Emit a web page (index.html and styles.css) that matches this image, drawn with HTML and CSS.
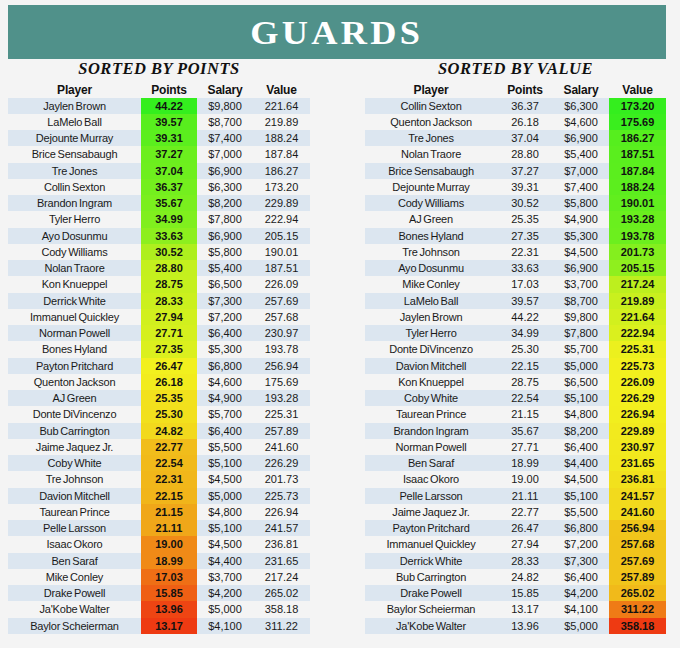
FILE: index.html
```html
<!DOCTYPE html>
<html lang="en">
<head>
<meta charset="utf-8">
<title>Guards</title>
<link rel="stylesheet" href="styles.css">
</head>
<body>
<div class="page">
  <header class="banner"><h1 class="title">GUARDS</h1></header>
  <div class="boards">
    <section class="board board-left">
      <h2 class="subtitle">SORTED BY POINTS</h2>
      <div class="grid" data-col="1" data-dir="high">
        <div class="hrow"><span>Player</span><span>Points</span><span>Salary</span><span>Value</span></div>
        <div class="row"><span class="name">Jaylen Brown</span><span class="hot">44.22</span><span>$9,800</span><span>221.64</span></div>
        <div class="row"><span class="name">LaMelo Ball</span><span class="hot">39.57</span><span>$8,700</span><span>219.89</span></div>
        <div class="row"><span class="name">Dejounte Murray</span><span class="hot">39.31</span><span>$7,400</span><span>188.24</span></div>
        <div class="row"><span class="name">Brice Sensabaugh</span><span class="hot">37.27</span><span>$7,000</span><span>187.84</span></div>
        <div class="row"><span class="name">Tre Jones</span><span class="hot">37.04</span><span>$6,900</span><span>186.27</span></div>
        <div class="row"><span class="name">Collin Sexton</span><span class="hot">36.37</span><span>$6,300</span><span>173.20</span></div>
        <div class="row"><span class="name">Brandon Ingram</span><span class="hot">35.67</span><span>$8,200</span><span>229.89</span></div>
        <div class="row"><span class="name">Tyler Herro</span><span class="hot">34.99</span><span>$7,800</span><span>222.94</span></div>
        <div class="row"><span class="name">Ayo Dosunmu</span><span class="hot">33.63</span><span>$6,900</span><span>205.15</span></div>
        <div class="row"><span class="name">Cody Williams</span><span class="hot">30.52</span><span>$5,800</span><span>190.01</span></div>
        <div class="row"><span class="name">Nolan Traore</span><span class="hot">28.80</span><span>$5,400</span><span>187.51</span></div>
        <div class="row"><span class="name">Kon Knueppel</span><span class="hot">28.75</span><span>$6,500</span><span>226.09</span></div>
        <div class="row"><span class="name">Derrick White</span><span class="hot">28.33</span><span>$7,300</span><span>257.69</span></div>
        <div class="row"><span class="name">Immanuel Quickley</span><span class="hot">27.94</span><span>$7,200</span><span>257.68</span></div>
        <div class="row"><span class="name">Norman Powell</span><span class="hot">27.71</span><span>$6,400</span><span>230.97</span></div>
        <div class="row"><span class="name">Bones Hyland</span><span class="hot">27.35</span><span>$5,300</span><span>193.78</span></div>
        <div class="row"><span class="name">Payton Pritchard</span><span class="hot">26.47</span><span>$6,800</span><span>256.94</span></div>
        <div class="row"><span class="name">Quenton Jackson</span><span class="hot">26.18</span><span>$4,600</span><span>175.69</span></div>
        <div class="row"><span class="name">AJ Green</span><span class="hot">25.35</span><span>$4,900</span><span>193.28</span></div>
        <div class="row"><span class="name">Donte DiVincenzo</span><span class="hot">25.30</span><span>$5,700</span><span>225.31</span></div>
        <div class="row"><span class="name">Bub Carrington</span><span class="hot">24.82</span><span>$6,400</span><span>257.89</span></div>
        <div class="row"><span class="name">Jaime Jaquez Jr.</span><span class="hot">22.77</span><span>$5,500</span><span>241.60</span></div>
        <div class="row"><span class="name">Coby White</span><span class="hot">22.54</span><span>$5,100</span><span>226.29</span></div>
        <div class="row"><span class="name">Tre Johnson</span><span class="hot">22.31</span><span>$4,500</span><span>201.73</span></div>
        <div class="row"><span class="name">Davion Mitchell</span><span class="hot">22.15</span><span>$5,000</span><span>225.73</span></div>
        <div class="row"><span class="name">Taurean Prince</span><span class="hot">21.15</span><span>$4,800</span><span>226.94</span></div>
        <div class="row"><span class="name">Pelle Larsson</span><span class="hot">21.11</span><span>$5,100</span><span>241.57</span></div>
        <div class="row"><span class="name">Isaac Okoro</span><span class="hot">19.00</span><span>$4,500</span><span>236.81</span></div>
        <div class="row"><span class="name">Ben Saraf</span><span class="hot">18.99</span><span>$4,400</span><span>231.65</span></div>
        <div class="row"><span class="name">Mike Conley</span><span class="hot">17.03</span><span>$3,700</span><span>217.24</span></div>
        <div class="row"><span class="name">Drake Powell</span><span class="hot">15.85</span><span>$4,200</span><span>265.02</span></div>
        <div class="row"><span class="name">Ja'Kobe Walter</span><span class="hot">13.96</span><span>$5,000</span><span>358.18</span></div>
        <div class="row"><span class="name">Baylor Scheierman</span><span class="hot">13.17</span><span>$4,100</span><span>311.22</span></div>
      </div>
    </section>
    <section class="board board-right">
      <h2 class="subtitle">SORTED BY VALUE</h2>
      <div class="grid" data-col="3" data-dir="low">
        <div class="hrow"><span>Player</span><span>Points</span><span>Salary</span><span>Value</span></div>
        <div class="row"><span class="name">Collin Sexton</span><span>36.37</span><span>$6,300</span><span class="hot">173.20</span></div>
        <div class="row"><span class="name">Quenton Jackson</span><span>26.18</span><span>$4,600</span><span class="hot">175.69</span></div>
        <div class="row"><span class="name">Tre Jones</span><span>37.04</span><span>$6,900</span><span class="hot">186.27</span></div>
        <div class="row"><span class="name">Nolan Traore</span><span>28.80</span><span>$5,400</span><span class="hot">187.51</span></div>
        <div class="row"><span class="name">Brice Sensabaugh</span><span>37.27</span><span>$7,000</span><span class="hot">187.84</span></div>
        <div class="row"><span class="name">Dejounte Murray</span><span>39.31</span><span>$7,400</span><span class="hot">188.24</span></div>
        <div class="row"><span class="name">Cody Williams</span><span>30.52</span><span>$5,800</span><span class="hot">190.01</span></div>
        <div class="row"><span class="name">AJ Green</span><span>25.35</span><span>$4,900</span><span class="hot">193.28</span></div>
        <div class="row"><span class="name">Bones Hyland</span><span>27.35</span><span>$5,300</span><span class="hot">193.78</span></div>
        <div class="row"><span class="name">Tre Johnson</span><span>22.31</span><span>$4,500</span><span class="hot">201.73</span></div>
        <div class="row"><span class="name">Ayo Dosunmu</span><span>33.63</span><span>$6,900</span><span class="hot">205.15</span></div>
        <div class="row"><span class="name">Mike Conley</span><span>17.03</span><span>$3,700</span><span class="hot">217.24</span></div>
        <div class="row"><span class="name">LaMelo Ball</span><span>39.57</span><span>$8,700</span><span class="hot">219.89</span></div>
        <div class="row"><span class="name">Jaylen Brown</span><span>44.22</span><span>$9,800</span><span class="hot">221.64</span></div>
        <div class="row"><span class="name">Tyler Herro</span><span>34.99</span><span>$7,800</span><span class="hot">222.94</span></div>
        <div class="row"><span class="name">Donte DiVincenzo</span><span>25.30</span><span>$5,700</span><span class="hot">225.31</span></div>
        <div class="row"><span class="name">Davion Mitchell</span><span>22.15</span><span>$5,000</span><span class="hot">225.73</span></div>
        <div class="row"><span class="name">Kon Knueppel</span><span>28.75</span><span>$6,500</span><span class="hot">226.09</span></div>
        <div class="row"><span class="name">Coby White</span><span>22.54</span><span>$5,100</span><span class="hot">226.29</span></div>
        <div class="row"><span class="name">Taurean Prince</span><span>21.15</span><span>$4,800</span><span class="hot">226.94</span></div>
        <div class="row"><span class="name">Brandon Ingram</span><span>35.67</span><span>$8,200</span><span class="hot">229.89</span></div>
        <div class="row"><span class="name">Norman Powell</span><span>27.71</span><span>$6,400</span><span class="hot">230.97</span></div>
        <div class="row"><span class="name">Ben Saraf</span><span>18.99</span><span>$4,400</span><span class="hot">231.65</span></div>
        <div class="row"><span class="name">Isaac Okoro</span><span>19.00</span><span>$4,500</span><span class="hot">236.81</span></div>
        <div class="row"><span class="name">Pelle Larsson</span><span>21.11</span><span>$5,100</span><span class="hot">241.57</span></div>
        <div class="row"><span class="name">Jaime Jaquez Jr.</span><span>22.77</span><span>$5,500</span><span class="hot">241.60</span></div>
        <div class="row"><span class="name">Payton Pritchard</span><span>26.47</span><span>$6,800</span><span class="hot">256.94</span></div>
        <div class="row"><span class="name">Immanuel Quickley</span><span>27.94</span><span>$7,200</span><span class="hot">257.68</span></div>
        <div class="row"><span class="name">Derrick White</span><span>28.33</span><span>$7,300</span><span class="hot">257.69</span></div>
        <div class="row"><span class="name">Bub Carrington</span><span>24.82</span><span>$6,400</span><span class="hot">257.89</span></div>
        <div class="row"><span class="name">Drake Powell</span><span>15.85</span><span>$4,200</span><span class="hot">265.02</span></div>
        <div class="row"><span class="name">Baylor Scheierman</span><span>13.17</span><span>$4,100</span><span class="hot">311.22</span></div>
        <div class="row"><span class="name">Ja'Kobe Walter</span><span>13.96</span><span>$5,000</span><span class="hot">358.18</span></div>
      </div>
    </section>
  </div>
</div>
<script src="script.js"></script>
</body>
</html>
```

FILE: styles.css
```css
html, body {
  margin: 0;
  padding: 0;
  background: #f4f4f4;
}

body {
  font-family: "Liberation Sans", Arial, sans-serif;
  color: #141414;
}

.page {
  padding-top: 5px;
}

.banner {
  margin: 0 14px 0 8px;
  height: 54px;
  background: #50918a;
  display: flex;
  justify-content: center;
  align-items: flex-start;
}

.title {
  margin: 0;
  padding-top: 1px;
  font-family: "Liberation Serif", "Times New Roman", serif;
  font-weight: bold;
  font-size: 33px;
  line-height: 54px;
  letter-spacing: 3px;
  color: #ffffff;
  transform: scaleX(1.1);
}

.boards {
  display: flex;
  gap: 55px;
  padding-left: 8px;
}

.board {
  display: flex;
  flex-direction: column;
}

.subtitle {
  margin: 1px 0 0 0;
  height: 18px;
  font-family: "Liberation Serif", "Times New Roman", serif;
  font-style: italic;
  font-weight: bold;
  font-size: 16.5px;
  line-height: 18px;
  letter-spacing: 0.5px;
  text-align: center;
  color: #111111;
}

.grid {
  display: flex;
  flex-direction: column;
}

.hrow,
.row {
  display: grid;
  grid-template-columns: 133px 56px 56px 57px;
}

.board-right .hrow,
.board-right .row {
  grid-template-columns: 132px 56px 56px 57px;
}

.hrow {
  height: 19.5px;
  padding-top: 3.5px;
  box-sizing: border-box;
  font-weight: bold;
  font-size: 12px;
  line-height: 16px;
  letter-spacing: -0.2px;
  color: #111111;
}

.hrow span {
  text-align: center;
}

.row {
  height: 16.25px;
  font-size: 11px;
  line-height: 16.25px;
  color: #1a1a1a;
}

.row:nth-child(even) {
  background: #dce6f0;
}

.row span {
  text-align: center;
  white-space: nowrap;
}

.row .name {
  letter-spacing: -0.2px;
  word-spacing: -1px;
}

.row .hot {
  font-weight: bold;
  color: #111111;
}
```

FILE: script.js
```js
(function () {
  var GREEN = [52, 238, 30];
  var YELLOW = [242, 240, 30];
  var RED = [238, 58, 18];

  function mix(a, b, t) {
    return [0, 1, 2].map(function (i) {
      return Math.round(a[i] + (b[i] - a[i]) * t);
    });
  }

  function colourFor(v, min, mid, max, lowColour, highColour) {
    var t, from, to;
    if (v <= mid) {
      t = (mid - v) / (mid - min);
      to = lowColour;
    } else {
      t = (v - mid) / (max - mid);
      to = highColour;
    }
    if (to === GREEN) {
      t = Math.pow(t, 0.7);
    }
    return mix(YELLOW, to, t);
  }

  document.querySelectorAll('.grid').forEach(function (grid) {
    var col = parseInt(grid.dataset.col, 10);
    var low = grid.dataset.dir === 'high' ? RED : GREEN;
    var high = grid.dataset.dir === 'high' ? GREEN : RED;
    var cells = Array.prototype.map.call(grid.querySelectorAll('.row'), function (r) {
      return r.children[col];
    });
    var vals = cells.map(function (c) { return parseFloat(c.textContent); });
    var sorted = vals.slice().sort(function (a, b) { return a - b; });
    var min = sorted[0];
    var max = sorted[sorted.length - 1];
    var pos = 0.5 * (sorted.length - 1);
    var lo = Math.floor(pos);
    var mid = sorted[lo] + (sorted[Math.ceil(pos)] - sorted[lo]) * (pos - lo);
    cells.forEach(function (c, i) {
      var rgb = colourFor(vals[i], min, mid, max, low, high);
      c.style.backgroundColor = 'rgb(' + rgb.join(',') + ')';
    });
  });
})();
```
